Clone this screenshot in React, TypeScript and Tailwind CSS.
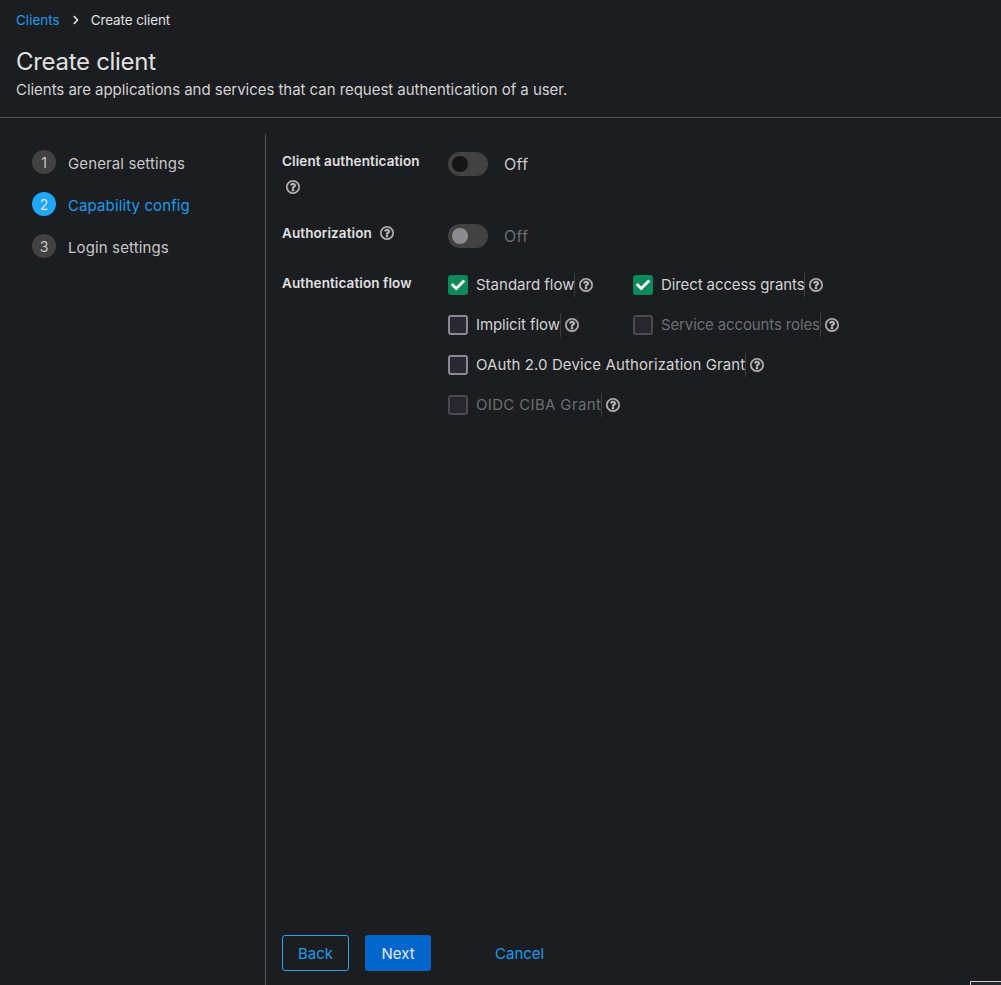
import { FaCheck, FaChevronRight, FaRegQuestionCircle } from "react-icons/fa";

const Help = ({ className = "" }: { className?: string }) => (
  <FaRegQuestionCircle className={`text-[14px] text-[#bdbdbd] stroke-[16px] shrink-0 ${className}`} />
);

const Step = ({ n, label, active }: { n: number; label: string; active?: boolean }) => (
  <div className="flex items-center h-[24px] gap-3">
    <span
      className={`flex w-[24px] h-[24px] items-center justify-center rounded-full text-[14px] ${
        active ? "bg-[#1fa7f8] text-[#e0e0e0]" : "bg-[#424242] text-[#c7c7c7]"
      }`}
    >
      {n}
    </span>
    <span className={`mt-[5px] tracking-[0.12px] ${active ? "text-[#1c9cea]" : "text-[#c7c7c7]"}`}>{label}</span>
  </div>
);

const Check = ({
  label,
  checked,
  disabled,
  width,
  tracking,
}: {
  label: string;
  checked?: boolean;
  disabled?: boolean;
  width?: string;
  tracking?: string;
}) => (
  <div className={`flex items-center h-[20px] ${width ?? ""}`}>
    <span
      className={`flex w-[20px] h-[20px] items-center justify-center rounded-[3px] mr-[8px] shrink-0 ${
        checked
          ? "bg-[#0c8a5c]"
          : disabled
            ? "bg-[#26262f] border-2 border-[#4a4a4f]"
            : "bg-[#2a2833] border-2 border-[#8a8a93]"
      }`}
    >
      {checked && <FaCheck className="text-[14px] text-white" />}
    </span>
    <span
      className={`whitespace-nowrap h-[24px] leading-[24px] border-r border-[#3c3f42] ${tracking ?? ""} ${
        disabled ? "text-[#6a6e73]" : "text-[#d2d2d2]"
      }`}
    >
      {label}
    </span>
    <Help className="ml-[4px]" />
  </div>
);

const Toggle = ({ disabled }: { disabled?: boolean }) => (
  <div className="flex items-center gap-4 h-[24px]">
    <span className="flex items-center w-[40px] h-[24px] rounded-full bg-[#424242] pl-[4px]">
      <span className={`w-[16px] h-[16px] rounded-full ${disabled ? "bg-[#8a8d90]" : "bg-[#151515]"}`} />
    </span>
    <span className={`text-[16px] tracking-[0.3px] ${disabled ? "text-[#6a6e73]" : "text-[#c7c7c7]"}`}>Off</span>
  </div>
);

export default function App() {
  return (
    <div className="relative flex h-[985px] w-[1001px] flex-col overflow-hidden bg-[#1b1d21] font-['Inter',sans-serif] text-[15px]">
      <div className="px-4 pt-[10px] h-[118px] border-b border-[#4f5255]">
        <div className="flex items-center h-[20px] text-[13.5px]">
          <span className="text-[#1c9cea]">Clients</span>
          <FaChevronRight className="ml-[11px] mr-[10px] text-[10px] text-[#e0e0e0]" />
          <span className="tracking-[-0.1px] text-[#e0e0e0]">Create client</span>
        </div>
        <h1 className="mt-[16px] text-[24px] tracking-[-0.3px] leading-[32px] text-[#e0e0e0]">Create client</h1>
        <p className="leading-[24px] tracking-[-0.04px] text-[#d2d2d2]">
          Clients are applications and services that can request authentication of a user.
        </p>
      </div>

      <div className="flex flex-1 pt-[16px]">
        <div className="w-[266px] shrink-0 border-r border-[#4f5255] pl-[32px] pt-[16px] flex flex-col gap-[18px]">
          <Step n={1} label="General settings" />
          <Step n={2} label="Capability config" active />
          <Step n={3} label="Login settings" />
        </div>

        <div className="flex flex-1 flex-col pl-[16px] pt-[18px] pb-[14px]">
          <div className="flex items-start h-[72px]">
            <div className="w-[166px] -mt-[1px] text-[13.5px] tracking-[0.1px] font-semibold text-[#e0e0e0] leading-[20px]">
              Client authentication
              <Help className="mt-[9px] ml-[4px]" />
            </div>
            <Toggle />
          </div>

          <div className="flex items-start h-[50px]">
            <div className="w-[166px] flex items-center gap-[8px] h-[20px] -mt-[1px] text-[13.5px] tracking-[0.1px] font-semibold text-[#e0e0e0]">
              Authorization
              <Help />
            </div>
            <Toggle disabled />
          </div>

          <div className="flex items-start">
            <div className="w-[166px] -mt-[1px] text-[13.5px] tracking-[0.1px] font-semibold text-[#e0e0e0] leading-[20px]">
              Authentication flow
            </div>
            <div className="flex flex-col gap-[20px] pt-[1px]">
              <div className="flex">
                <Check label="Standard flow" checked width="w-[185px]" />
                <Check label="Direct access grants" checked tracking="tracking-[-0.1px]" />
              </div>
              <div className="flex">
                <Check label="Implicit flow" width="w-[185px]" tracking="tracking-[-0.1px]" />
                <Check label="Service accounts roles" disabled tracking="tracking-[-0.13px]" />
              </div>
              <Check label="OAuth 2.0 Device Authorization Grant" tracking="tracking-[0.1px]" />
              <Check label="OIDC CIBA Grant" disabled tracking="tracking-[0.35px]" />
            </div>
          </div>

          <div className="mt-auto flex items-center">
            <button className="h-[36px] w-[67px] pt-[2px] rounded-[3px] border border-[#1fa7f8] text-[#1c9cea]">Back</button>
            <button className="ml-[16px] h-[36px] w-[66px] pt-[2px] rounded-[3px] bg-[#0066cc] text-[#e8e8e8]">Next</button>
            <button className="ml-[64px] pt-[2px] text-[#1c9cea]">Cancel</button>
          </div>
        </div>
      </div>

      <div className="absolute left-[970px] top-[981px] h-[10px] w-[40px] border-l border-t border-[#d0d0d0] bg-[#26262f]" />
    </div>
  );
}
